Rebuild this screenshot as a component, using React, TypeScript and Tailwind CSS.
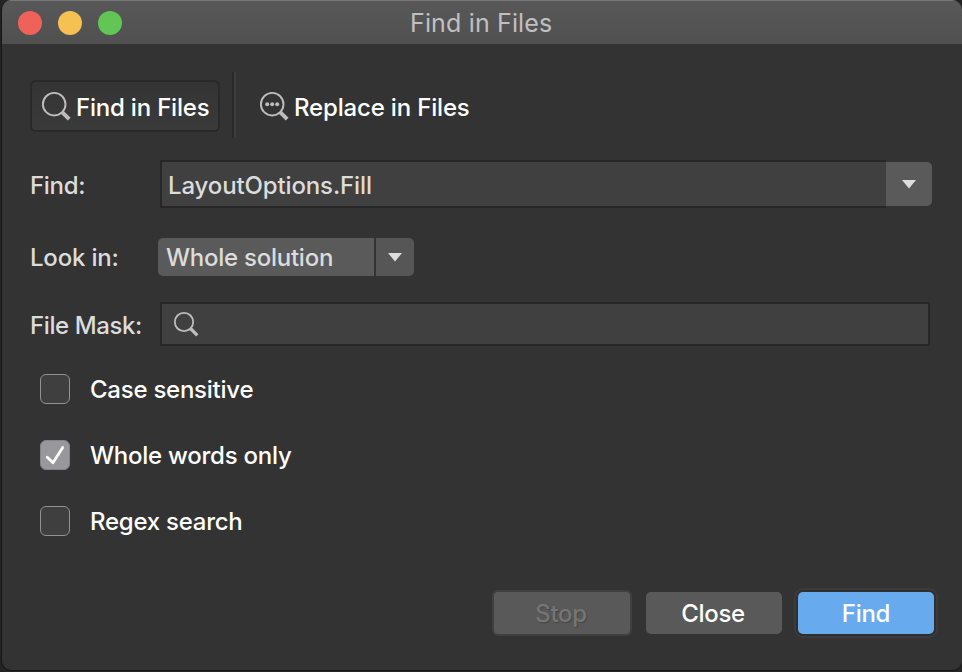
import type { ReactNode } from "react";

function SearchIcon({ dots = false }: { dots?: boolean }) {
  return (
    <svg className="h-[30px] w-[30px] shrink-0" viewBox="0 0 30 30" fill="none" stroke="#bdbdbd">
      <circle cx="13.2" cy="13.2" r="11.3" strokeWidth="1.9" />
      <path d="M20.8 20.8 L28.2 28.2" strokeWidth="4" />
      {dots && (
        <g fill="#bdbdbd" stroke="none">
          <circle cx="8.2" cy="13.2" r="2" />
          <circle cx="13.2" cy="13.2" r="2" />
          <circle cx="18.2" cy="13.2" r="2" />
        </g>
      )}
    </svg>
  );
}

function Arrow() {
  return (
    <svg className="h-[9px] w-[14px]" viewBox="0 0 14 9" fill="#dedede">
      <path d="M0 0H14L7 8.6Z" />
    </svg>
  );
}

function CheckRow({ children, checked = false }: { children: ReactNode; checked?: boolean }) {
  return (
    <label className="flex h-[30px] items-center gap-5">
      {checked ? (
        <span className="flex size-[30px] items-center justify-center rounded-[6px] border border-[#858488] bg-[#98979b]">
          <svg className="size-[28px]" viewBox="0 0 28 28" fill="none" stroke="#fff" strokeWidth="2.8" strokeLinecap="round" strokeLinejoin="round">
            <path d="M6.2 16.2L12 21.8L21.7 6.5" />
          </svg>
        </span>
      ) : (
        <span className="size-[30px] rounded-[6px] border border-[#929292] bg-[#3f3f3f]" />
      )}
      <span className="pt-[2px] whitespace-nowrap text-[24px] leading-[30px] tracking-[-0.25px] text-white">{children}</span>
    </label>
  );
}

export default function App() {
  return (
    <div className="h-[672px] w-[962px] overflow-hidden bg-[#242424] pl-px font-['Inter',sans-serif] text-[24px] leading-[30px] font-medium tracking-[-0.3px] text-[#dcdcdc]">
      <div className="flex h-[671px] flex-col overflow-hidden rounded-[10px] border-b border-l border-[#151515] bg-[#333333]">
        <header className="flex h-[44px] shrink-0 items-center border-t border-[#777777] bg-linear-to-b from-[#585858] to-[#505050] pl-4">
          <div className="flex gap-4">
            <i className="size-6 rounded-full bg-[#ee6259]" />
            <i className="size-6 rounded-full bg-[#f6c153]" />
            <i className="size-6 rounded-full bg-[#61c656]" />
          </div>
          <h1 className="ml-[288px] whitespace-nowrap text-[25px] leading-[30px] font-normal tracking-[0.15px] text-[#c0c0c0]">Find in Files</h1>
        </header>

        <nav className="mt-[28px] flex h-[66px] items-center pl-7">
          <button className="mt-[2px] flex h-[52px] w-[190px] items-center rounded-[6px] border-2 border-[#292929] bg-linear-to-b from-[#343434] to-[#3a3a3a] pl-[9px] text-white">
            <SearchIcon />
            <span className="ml-[5px] pt-[3px] whitespace-nowrap tracking-[-0.2px]">Find in Files</span>
          </button>
          <div className="ml-[12px] h-[66px] w-1 border-r-2 border-l-2 border-r-[#3c3c3c] border-l-[#292929]" />
          <button className="mt-[2px] ml-[23px] flex h-[52px] items-center text-white">
            <SearchIcon dots />
            <span className="ml-[5px] pt-[3px] whitespace-nowrap tracking-[-0.17px]">Replace in Files</span>
          </button>
        </nav>

        <div className="mt-[22px] flex h-[48px] items-center pl-7">
          <span className="w-[130px] pt-[3px]">Find:</span>
          <div className="flex h-[48px] w-[726px] items-center border-2 border-r-0 border-[#272727] bg-[#404040] pt-[3px] pl-[6px] tracking-[-0.13px]">
            LayoutOptions.Fill
          </div>
          <button className="flex h-[44px] w-[46px] items-center justify-center rounded-r-[5px] bg-[#5a5a5a]">
            <Arrow />
          </button>
        </div>

        <div className="mt-[30px] flex h-[38px] items-center pl-7">
          <span className="w-[128px] pt-[2px] tracking-[-0.2px]">Look in:</span>
          <div className="flex h-[38px] w-[216px] items-center rounded-l-[5px] bg-[#5a5a5a] pt-[2px] pl-[8px] tracking-[-0.25px]">Whole solution</div>
          <button className="ml-[2px] flex h-[38px] w-[38px] items-center justify-center rounded-r-[5px] bg-[#565656]">
            <Arrow />
          </button>
        </div>

        <div className="mt-[26px] flex h-[44px] items-center pl-7">
          <span className="w-[130px] pt-[3px] whitespace-nowrap tracking-[-0.4px]">File Mask:</span>
          <div className="flex h-[44px] w-[770px] items-center border-2 border-[#272727] bg-[#404040] pl-[11px]">
            <svg className="size-[26px]" viewBox="0 0 26 26" fill="none" stroke="#bdbdbd">
              <circle cx="11" cy="11" r="9.2" strokeWidth="1.8" />
              <path d="M17.5 17.5L24.3 24.3" strokeWidth="3.2" />
            </svg>
          </div>
        </div>

        <div className="mt-[28px] flex flex-col gap-9 pl-[38px]">
          <CheckRow>Case sensitive</CheckRow>
          <CheckRow checked>Whole words only</CheckRow>
          <CheckRow>Regex search</CheckRow>
        </div>

        <footer className="mt-[54px] flex h-[46px] items-center pl-[490px]">
          <button className="h-[46px] w-[140px] rounded-[6px] border-2 border-[#404040] bg-[#595959] pt-[2px] pr-[2px] text-[#757575] [text-shadow:1px_1px_1px_#444]">Stop</button>
          <button className="ml-[14px] h-[42px] w-[136px] rounded-[5px] bg-[#595959] pt-[2px] pr-[2px] text-white">Close</button>
          <button className="ml-[16px] h-[42px] w-[136px] rounded-[5px] bg-[#67abee] pt-[2px] text-white shadow-[0_0_0_2px_#2f2f2f,0_0_0_4px_#3b3b3b]">Find</button>
        </footer>
      </div>
    </div>
  );
}
